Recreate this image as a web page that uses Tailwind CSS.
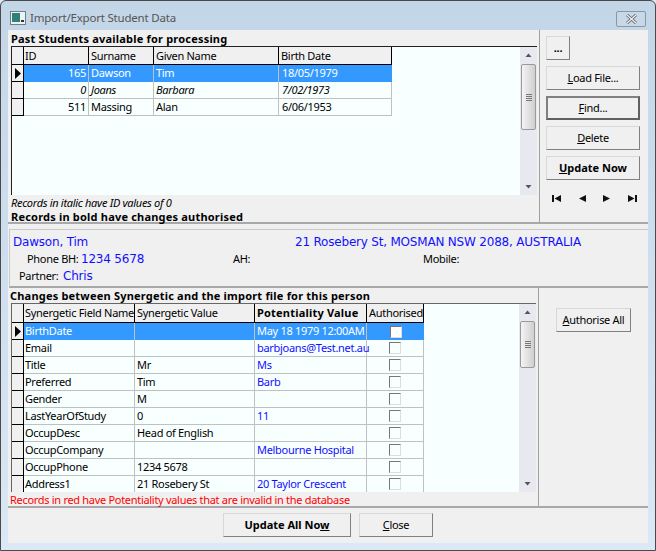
<!DOCTYPE html>
<html lang="en">
<head>
<meta charset="UTF-8">
<title>Import/Export Student Data</title>
<script src="https://cdn.jsdelivr.net/npm/@tailwindcss/browser@4"></script>
</head>
<body class="bg-[#dbe8f5] overflow-hidden">
<div class="w-[656px] h-[551px] flex flex-col border border-[#4a4a4a] rounded-t-[6px] bg-gradient-to-b from-[#c3d6e8] to-[#dbe8f5] font-['Noto_Sans',sans-serif] text-[11px] leading-[14px] tracking-[-0.3px] text-black overflow-hidden">
  <!-- title bar -->
  <div class="h-[29px] shrink-0 flex items-center pt-[5px] pl-[9px] pr-[9px]">
    <svg width="16" height="14" viewBox="0 0 16 14" class="mr-[4px]"><rect x="0.5" y="0.5" width="15" height="13" fill="#eef2f2" stroke="#6f7f86"/><rect x="2" y="2" width="8" height="9" fill="#2f7f7a"/><rect x="11" y="9" width="3" height="2" fill="#333"/></svg>
    <span class="text-[11.5px] tracking-[-0.2px] text-[#555]">Import/Export Student Data</span>
    <div class="ml-auto w-[30px] h-[16px] mt-[1px] border border-[#8a98a4] rounded-[2px] bg-[#c9d8e6] flex items-center justify-center">
      <svg width="13" height="10" viewBox="0 0 13 10"><path d="M2 1 L11 9 M11 1 L2 9" stroke="#5b6670" stroke-width="3" fill="none"/><path d="M2 1 L11 9 M11 1 L2 9" stroke="#e8eef2" stroke-width="1.4" fill="none"/></svg>
    </div>
  </div>

  <!-- client area -->
  <div class="mx-[7px] w-[640px] h-[513px] shrink-0 bg-[#f0f0f0] flex flex-col">
    <!-- top section -->
    <div class="h-[194px] shrink-0 flex border-b-2 border-[#a8a8a8]">
      <div class="w-[532px] shrink-0 flex flex-col border-r border-[#a0a0a0]">
        <div class="h-[15px] pl-[3px] pt-[2px] font-bold tracking-[0.2px]">Past Students available for processing</div>
        <div class="h-[150px] mt-[1px] ml-[3px] mr-[2px] bg-[#f8ffff] border-l border-t border-[#222] flex">
          <div class="w-[509px] flex flex-col">
            <div class="flex h-[18px] border-b border-black bg-[#f0f0f0] w-[380px]">
              <div class="w-[12px] border-r border-black"></div>
              <div class="w-[65px] border-r border-black pl-[1px] leading-[17px]">ID</div>
              <div class="w-[65px] border-r border-black pl-[2px] leading-[17px]">Surname</div>
              <div class="w-[125px] border-r border-black pl-[2px] leading-[17px]">Given Name</div>
              <div class="flex-1 border-r border-black pl-[2px] leading-[17px]">Birth Date</div>
            </div>
            <div class="flex h-[17px] w-[380px] leading-[16px]">
              <div class="w-[12px] border-r border-b border-black bg-[#f0f0f0] flex items-center pl-[3px]"><svg width="6" height="11" viewBox="0 0 6 11"><path d="M0 0 L6 5.5 L0 11 Z" fill="#000"/></svg></div>
              <div class="w-[65px] bg-[#3399ff] text-white text-right pr-[2px] border-r border-[#c0c0c0]">165</div>
              <div class="w-[65px] bg-[#3399ff] text-white pl-[2px] border-r border-[#c0c0c0]">Dawson</div>
              <div class="w-[125px] bg-[#3399ff] text-white pl-[2px] border-r border-[#c0c0c0]">Tim</div>
              <div class="flex-1 bg-[#3399ff] text-white pl-[3px]">18/05/1979</div>
            </div>
            <div class="flex h-[17px] w-[380px] leading-[16px] italic">
              <div class="w-[12px] border-r border-b border-black bg-[#f0f0f0]"></div>
              <div class="w-[65px] text-right pr-[2px] border-r border-b border-[#c0c0c0]">0</div>
              <div class="w-[65px] pl-[2px] border-r border-b border-[#c0c0c0]">Joans</div>
              <div class="w-[125px] pl-[2px] border-r border-b border-[#c0c0c0]">Barbara</div>
              <div class="flex-1 pl-[3px] border-r border-b border-[#c0c0c0]">7/02/1973</div>
            </div>
            <div class="flex h-[17px] w-[380px] leading-[16px]">
              <div class="w-[12px] border-r border-b border-black bg-[#f0f0f0]"></div>
              <div class="w-[65px] text-right pr-[2px] border-r border-b border-[#c0c0c0]">511</div>
              <div class="w-[65px] pl-[2px] border-r border-b border-[#c0c0c0]">Massing</div>
              <div class="w-[125px] pl-[2px] border-r border-b border-[#c0c0c0]">Alan</div>
              <div class="flex-1 pl-[3px] border-r border-b border-[#c0c0c0]">6/06/1953</div>
            </div>
          </div>
          <!-- scrollbar -->
          <div class="w-[17px] bg-[#e8e8f0] flex flex-col items-center">
            <svg width="7" height="17" viewBox="0 0 7 17" class="shrink-0"><path d="M0.5 10 L3.5 6.5 L6.5 10 Z" fill="#555"/></svg>
            <div class="w-[15px] h-[66px] border border-[#9a9a9a] rounded-[2px] bg-gradient-to-r from-[#f4f4f4] to-[#cfcfcf] flex flex-col items-center justify-center gap-[1px]">
              <div class="w-[6px] h-px bg-[#777]"></div><div class="w-[6px] h-px bg-[#777]"></div><div class="w-[6px] h-px bg-[#777]"></div><div class="w-[6px] h-px bg-[#777]"></div>
            </div>
            <svg width="7" height="17" viewBox="0 0 7 17" class="mt-auto shrink-0"><path d="M0.5 7 L3.5 10.5 L6.5 7 Z" fill="#555"/></svg>
          </div>
        </div>
        <div class="h-[14px] pl-[3px] mt-[1px] italic">Records in italic have ID values of 0</div>
        <div class="h-[12px] pl-[3px] font-bold tracking-[0.2px]">Records in bold have changes authorised</div>
      </div>
      <!-- right buttons -->
      <div class="flex-1 flex flex-col pl-[6px] pt-[6px]">
        <div class="w-[24px] h-[24px] bg-[#f0f0f0] border border-[#d8d8d8] border-r-[#808080] border-b-[#808080] flex items-center justify-center font-bold">...</div>
        <div class="w-[94px] h-[24px] mt-[6px] border border-[#d8d8d8] border-r-[#808080] border-b-[#808080] flex items-center justify-center"><span><u>L</u>oad File...</span></div>
        <div class="w-[94px] h-[24px] mt-[6px] border-2 border-[#606060] border-t-[#808080] border-l-[#808080] flex items-center justify-center"><span><u>F</u>ind...</span></div>
        <div class="w-[94px] h-[24px] mt-[6px] border border-[#d8d8d8] border-r-[#808080] border-b-[#808080] flex items-center justify-center"><span><u>D</u>elete</span></div>
        <div class="w-[94px] h-[24px] mt-[6px] border border-[#d8d8d8] border-r-[#808080] border-b-[#808080] flex items-center justify-center font-bold tracking-normal"><span><u>U</u>pdate Now</span></div>
        <div class="w-[94px] mt-[15px] pl-[6px] pr-[3px] flex justify-between items-center">
          <svg width="9" height="7" viewBox="0 0 9 7"><path d="M0 0 H2 V7 H0 Z M9 0 V7 L2.5 3.5 Z" fill="#111"/></svg>
          <svg width="7" height="7" viewBox="0 0 7 7"><path d="M7 0 V7 L0 3.5 Z" fill="#111"/></svg>
          <svg width="7" height="7" viewBox="0 0 7 7"><path d="M0 0 V7 L7 3.5 Z" fill="#111"/></svg>
          <svg width="9" height="7" viewBox="0 0 9 7"><path d="M0 0 V7 L6.5 3.5 Z M7 0 H9 V7 H7 Z" fill="#111"/></svg>
        </div>
      </div>
    </div>

    <!-- person details -->
    <div class="h-[59px] shrink-0 mt-[5px] border-t border-[#c8c8c8] border-b-2 border-b-[#a8a8a8] ml-[1px] border-l border-l-[#c8c8c8] whitespace-nowrap">
      <div class="h-[21px] pt-[2px] flex items-center text-[12px] tracking-[-0.2px] text-[#1010ff] font-['DejaVu_Sans',sans-serif]">
        <span class="w-[285px] pl-[3px]">Dawson, Tim</span><span>21 Rosebery St, MOSMAN NSW 2088, AUSTRALIA</span>
      </div>
      <div class="h-[16px] flex items-center">
        <span class="w-[71px] pl-[17px]">Phone BH:</span>
        <span class="w-[152px] text-[12px] tracking-[-0.2px] text-[#1010ff] font-['DejaVu_Sans',sans-serif]">1234 5678</span>
        <span class="w-[190px]">AH:</span>
        <span>Mobile:</span>
      </div>
      <div class="h-[17px] flex items-center">
        <span class="w-[53px] pl-[9px]">Partner:</span>
        <span class="text-[12px] tracking-[-0.2px] text-[#1010ff] font-['DejaVu_Sans',sans-serif]">Chris</span>
      </div>
    </div>

    <!-- changes section -->
    <div class="h-[220px] shrink-0 flex border-b-2 border-[#a8a8a8]">
      <div class="w-[531px] shrink-0 flex flex-col border-r border-[#a0a0a0]">
        <div class="h-[15px] pl-[2px] pt-[1px] font-bold tracking-[0.2px]">Changes between Synergetic and the import file for this person</div>
        <div class="h-[189px] shrink-0 ml-[3px] mr-[2px] bg-[#f8ffff] border-l border-t border-[#666] flex overflow-hidden">
          <div class="w-[508px] flex flex-col">
            <div class="flex h-[19px] w-[412px] shrink-0 border-b border-black bg-[#f0f0f0] leading-[17px]">
              <div class="w-[12px] border-r border-black"></div>
              <div class="w-[111px] border-r border-black pl-[1px] whitespace-nowrap overflow-hidden">Synergetic Field Name</div>
              <div class="w-[120px] border-r border-black pl-[2px]">Synergetic Value</div>
              <div class="w-[112px] border-r border-black pl-[2px] font-bold tracking-[0.2px]">Potentiality Value</div>
              <div class="flex-1 border-r border-black pl-[2px]">Authorised</div>
            </div>
            <div class="flex h-[17px] w-[412px] shrink-0 leading-[16px]">
              <div class="w-[12px] border-r border-b border-black bg-[#f0f0f0] flex items-center pl-[3px]"><svg width="6" height="11" viewBox="0 0 6 11"><path d="M0 0 L6 5.5 L0 11 Z" fill="#000"/></svg></div>
              <div class="w-[111px] bg-[#3399ff] text-white pl-[1px] border-r border-[#c0c0c0]">BirthDate</div>
              <div class="w-[120px] bg-[#3399ff] text-white border-r border-[#c0c0c0]"></div>
              <div class="w-[112px] bg-[#3399ff] text-white pl-[2px] border-r border-[#c0c0c0] whitespace-nowrap">May 18 1979 12:00AM</div>
              <div class="flex-1 bg-[#3399ff] flex items-center justify-center"><div class="w-[12px] h-[12px] bg-white border border-[#777] border-r-[#ddd] border-b-[#ddd]"></div></div>
            </div>
            <div class="flex h-[17px] w-[412px] shrink-0 leading-[16px]">
              <div class="w-[12px] border-r border-b border-black bg-[#f0f0f0]"></div>
              <div class="w-[111px] pl-[1px] border-r border-b border-[#c0c0c0]">Email</div>
              <div class="w-[120px] pl-[2px] border-r border-b border-[#c0c0c0]"></div>
              <div class="w-[112px] pl-[2px] border-r border-b border-[#c0c0c0] text-[#1010ff] whitespace-nowrap">barbjoans@Test.net.au</div>
              <div class="flex-1 border-r border-b border-[#c0c0c0] flex items-center justify-center"><div class="w-[12px] h-[12px] border border-[#777] border-r-[#ddd] border-b-[#ddd]"></div></div>
            </div>
            <div class="flex h-[17px] w-[412px] shrink-0 leading-[16px]">
              <div class="w-[12px] border-r border-b border-black bg-[#f0f0f0]"></div>
              <div class="w-[111px] pl-[1px] border-r border-b border-[#c0c0c0]">Title</div>
              <div class="w-[120px] pl-[2px] border-r border-b border-[#c0c0c0]">Mr</div>
              <div class="w-[112px] pl-[2px] border-r border-b border-[#c0c0c0] text-[#1010ff]">Ms</div>
              <div class="flex-1 border-r border-b border-[#c0c0c0] flex items-center justify-center"><div class="w-[12px] h-[12px] border border-[#777] border-r-[#ddd] border-b-[#ddd]"></div></div>
            </div>
            <div class="flex h-[17px] w-[412px] shrink-0 leading-[16px]">
              <div class="w-[12px] border-r border-b border-black bg-[#f0f0f0]"></div>
              <div class="w-[111px] pl-[1px] border-r border-b border-[#c0c0c0]">Preferred</div>
              <div class="w-[120px] pl-[2px] border-r border-b border-[#c0c0c0]">Tim</div>
              <div class="w-[112px] pl-[2px] border-r border-b border-[#c0c0c0] text-[#1010ff]">Barb</div>
              <div class="flex-1 border-r border-b border-[#c0c0c0] flex items-center justify-center"><div class="w-[12px] h-[12px] border border-[#777] border-r-[#ddd] border-b-[#ddd]"></div></div>
            </div>
            <div class="flex h-[17px] w-[412px] shrink-0 leading-[16px]">
              <div class="w-[12px] border-r border-b border-black bg-[#f0f0f0]"></div>
              <div class="w-[111px] pl-[1px] border-r border-b border-[#c0c0c0]">Gender</div>
              <div class="w-[120px] pl-[2px] border-r border-b border-[#c0c0c0]">M</div>
              <div class="w-[112px] pl-[2px] border-r border-b border-[#c0c0c0] text-[#1010ff]"></div>
              <div class="flex-1 border-r border-b border-[#c0c0c0] flex items-center justify-center"><div class="w-[12px] h-[12px] border border-[#777] border-r-[#ddd] border-b-[#ddd]"></div></div>
            </div>
            <div class="flex h-[17px] w-[412px] shrink-0 leading-[16px]">
              <div class="w-[12px] border-r border-b border-black bg-[#f0f0f0]"></div>
              <div class="w-[111px] pl-[1px] border-r border-b border-[#c0c0c0]">LastYearOfStudy</div>
              <div class="w-[120px] pl-[2px] border-r border-b border-[#c0c0c0]">0</div>
              <div class="w-[112px] pl-[2px] border-r border-b border-[#c0c0c0] text-[#1010ff]">11</div>
              <div class="flex-1 border-r border-b border-[#c0c0c0] flex items-center justify-center"><div class="w-[12px] h-[12px] border border-[#777] border-r-[#ddd] border-b-[#ddd]"></div></div>
            </div>
            <div class="flex h-[17px] w-[412px] shrink-0 leading-[16px]">
              <div class="w-[12px] border-r border-b border-black bg-[#f0f0f0]"></div>
              <div class="w-[111px] pl-[1px] border-r border-b border-[#c0c0c0]">OccupDesc</div>
              <div class="w-[120px] pl-[2px] border-r border-b border-[#c0c0c0]">Head of English</div>
              <div class="w-[112px] pl-[2px] border-r border-b border-[#c0c0c0] text-[#1010ff]"></div>
              <div class="flex-1 border-r border-b border-[#c0c0c0] flex items-center justify-center"><div class="w-[12px] h-[12px] border border-[#777] border-r-[#ddd] border-b-[#ddd]"></div></div>
            </div>
            <div class="flex h-[17px] w-[412px] shrink-0 leading-[16px]">
              <div class="w-[12px] border-r border-b border-black bg-[#f0f0f0]"></div>
              <div class="w-[111px] pl-[1px] border-r border-b border-[#c0c0c0]">OccupCompany</div>
              <div class="w-[120px] pl-[2px] border-r border-b border-[#c0c0c0]"></div>
              <div class="w-[112px] pl-[2px] border-r border-b border-[#c0c0c0] text-[#1010ff] whitespace-nowrap">Melbourne Hospital</div>
              <div class="flex-1 border-r border-b border-[#c0c0c0] flex items-center justify-center"><div class="w-[12px] h-[12px] border border-[#777] border-r-[#ddd] border-b-[#ddd]"></div></div>
            </div>
            <div class="flex h-[17px] w-[412px] shrink-0 leading-[16px]">
              <div class="w-[12px] border-r border-b border-black bg-[#f0f0f0]"></div>
              <div class="w-[111px] pl-[1px] border-r border-b border-[#c0c0c0]">OccupPhone</div>
              <div class="w-[120px] pl-[2px] border-r border-b border-[#c0c0c0]">1234 5678</div>
              <div class="w-[112px] pl-[2px] border-r border-b border-[#c0c0c0] text-[#1010ff]"></div>
              <div class="flex-1 border-r border-b border-[#c0c0c0] flex items-center justify-center"><div class="w-[12px] h-[12px] border border-[#777] border-r-[#ddd] border-b-[#ddd]"></div></div>
            </div>
            <div class="flex h-[16px] w-[412px] shrink-0 leading-[16px]">
              <div class="w-[12px] border-r border-black bg-[#f0f0f0]"></div>
              <div class="w-[111px] pl-[1px] border-r border-[#c0c0c0]">Address1</div>
              <div class="w-[120px] pl-[2px] border-r border-[#c0c0c0]">21 Rosebery St</div>
              <div class="w-[112px] pl-[2px] border-r border-[#c0c0c0] text-[#1010ff] whitespace-nowrap">20 Taylor Crescent</div>
              <div class="flex-1 border-r border-[#c0c0c0] flex items-center justify-center"><div class="w-[12px] h-[12px] border border-[#777] border-r-[#ddd] border-b-[#ddd]"></div></div>
            </div>
          </div>
          <div class="w-[17px] bg-[#e8e8f0] flex flex-col items-center">
            <svg width="7" height="17" viewBox="0 0 7 17" class="shrink-0"><path d="M0.5 10 L3.5 6.5 L6.5 10 Z" fill="#555"/></svg>
            <div class="w-[15px] h-[47px] border border-[#9a9a9a] rounded-[2px] bg-gradient-to-r from-[#f4f4f4] to-[#cfcfcf] flex flex-col items-center justify-center gap-[1px]">
              <div class="w-[6px] h-px bg-[#777]"></div><div class="w-[6px] h-px bg-[#777]"></div><div class="w-[6px] h-px bg-[#777]"></div><div class="w-[6px] h-px bg-[#777]"></div>
            </div>
            <svg width="7" height="17" viewBox="0 0 7 17" class="mt-auto shrink-0"><path d="M0.5 7 L3.5 10.5 L6.5 7 Z" fill="#555"/></svg>
          </div>
        </div>
        <div class="pl-[2px] pt-[1px] text-[#ff0000]">Records in red have Potentiality values that are invalid in the database</div>
      </div>
      <div class="flex-1 pl-[17px] pt-[20px]">
        <div class="w-[75px] h-[24px] border border-[#d8d8d8] border-r-[#808080] border-b-[#808080] flex items-center justify-center"><span><u>A</u>uthorise All</span></div>
      </div>
    </div>

    <!-- footer -->
    <div class="flex-1 flex justify-center items-start pt-[5px] gap-[8px]">
      <div class="w-[128px] h-[24px] border border-[#d8d8d8] border-r-[#808080] border-b-[#808080] flex items-center justify-center font-bold tracking-normal"><span>Update All No<u>w</u></span></div>
      <div class="w-[74px] h-[24px] border border-[#d8d8d8] border-r-[#808080] border-b-[#808080] flex items-center justify-center"><span><u>C</u>lose</span></div>
    </div>
  </div>
</div>
</body>
</html>
